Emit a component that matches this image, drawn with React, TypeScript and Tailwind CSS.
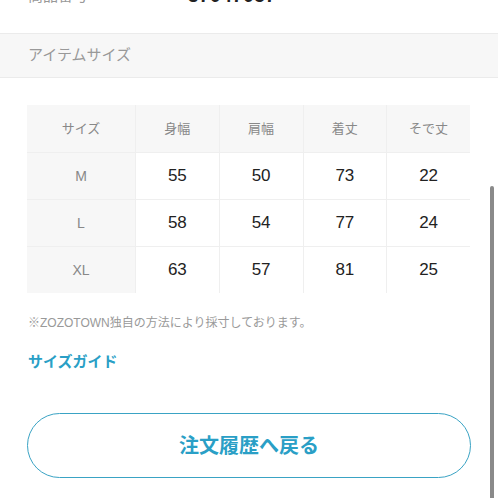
import { Fragment } from "react";

const sizes = [
  { size: "M", values: [55, 50, 73, 22] },
  { size: "L", values: [58, 54, 77, 24] },
  { size: "XL", values: [63, 57, 81, 25] },
];

const headers = ["サイズ", "身幅", "肩幅", "着丈", "そで丈"];

export default function App() {
  return (
    <div
      className="relative h-[498px] w-[498px] overflow-hidden bg-white"
      style={{ fontFamily: '"Liberation Sans", "Noto Sans CJK JP", sans-serif' }}
    >
      {/* cut-off product row (scrolled past the top) */}
      <div className="-mt-[14px] flex h-[19px] items-end px-[28px]">
        <span className="w-[160px] text-[15px] leading-[19px] text-[#999]">商品番号</span>
        <span className="text-[19px] font-bold leading-[19px] tracking-wide text-[#222]">37047057</span>
      </div>

      {/* section header */}
      <div className="mt-[28px] flex h-[45px] items-center border-y border-[#ebebeb] bg-[#f7f7f7] px-[28px]">
        <span className="text-[15px] text-[#999]">アイテムサイズ</span>
      </div>

      {/* size table */}
      <div className="ml-[27px] mr-[28px] mt-[27px] grid grid-cols-[108px_repeat(4,1fr)] gap-px bg-[#efefef]">
        {headers.map((h) => (
          <div key={h} className="flex h-[47px] items-center justify-center bg-[#f7f7f7] text-[13px] text-[#888]">
            {h}
          </div>
        ))}
        {sizes.map((row) => (
          <Fragment key={row.size}>
            <div className="flex h-[46px] items-center justify-center bg-[#f7f7f7] text-[14px] text-[#888]">
              {row.size}
            </div>
            {row.values.map((v, i) => (
              <div key={i} className="flex h-[46px] items-center justify-center bg-white text-[17px] text-[#222]">
                {v}
              </div>
            ))}
          </Fragment>
        ))}
      </div>

      <p className="mt-[21px] px-[28px] text-[12px] leading-[18px] text-[#999]">
        ※ZOZOTOWN独自の方法により採寸しております。
      </p>

      <p className="mt-[20px] px-[28px] text-[15px] font-bold leading-[20px] text-[#2a9fc6]">サイズガイド</p>

      <div className="ml-[27px] mr-[27px] mt-[41px] flex h-[65px] items-center justify-center rounded-full border border-[#3aa3c4]">
        <span className="text-[20px] font-bold text-[#2a9fc6]">注文履歴へ戻る</span>
      </div>

      {/* scrollbar */}
      <div className="absolute right-[4px] top-[186px] h-[320px] w-[4px] rounded-full bg-[#8a8a8a]" />
    </div>
  );
}
